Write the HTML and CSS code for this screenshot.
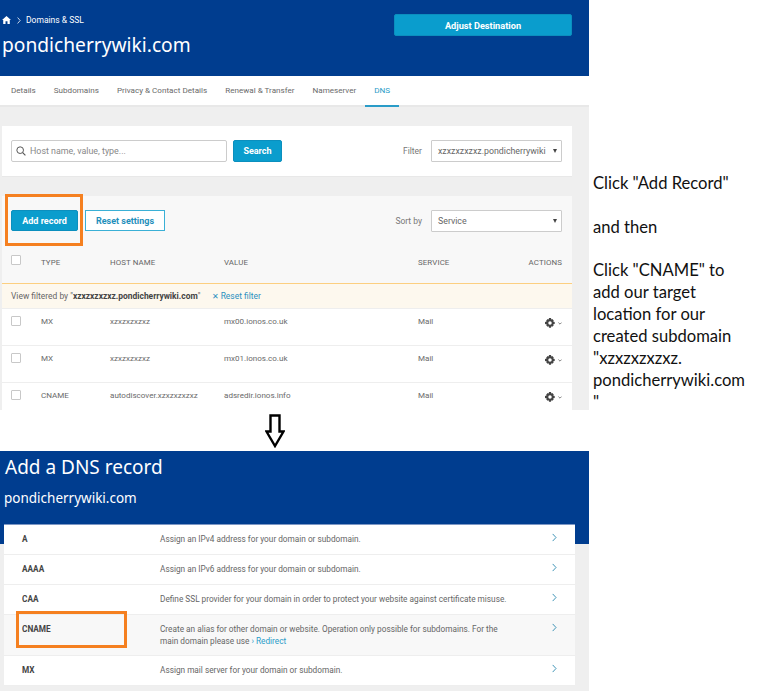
FILE: index.html
```html
<!DOCTYPE html>
<html lang="en">
<head>
<meta charset="utf-8">
<title>Add a DNS record</title>
<link rel="stylesheet" href="styles.css">
</head>
<body>
<div class="canvas">
  <main class="shots">
    <section class="shot-top">
      <header class="hero">
        <div class="hero-left">
          <div class="crumbs">
            <svg class="home" viewBox="0 0 10 9" width="9" height="8"><path d="M5 0 0 4.500h1.300V9h2.600V6h2.200v3h2.600V4.500H10z" fill="#fff"/></svg>
            <svg class="crumb-sep" viewBox="0 0 5 9" width="4" height="7"><path d="M.7.700 4 4.500.7 8.300" fill="none" stroke="#fff"/></svg>
            <span>Domains &amp; SSL</span>
          </div>
          <h1 class="domain">pondicherrywiki.com</h1>
        </div>
        <button class="btn btn-hero">Adjust Destination</button>
      </header>
      <nav class="tabs">
        <a class="tab">Details</a>
        <a class="tab">Subdomains</a>
        <a class="tab">Privacy &amp; Contact Details</a>
        <a class="tab">Renewal &amp; Transfer</a>
        <a class="tab">Nameserver</a>
        <a class="tab tab-active">DNS</a>
      </nav>
      <div class="workspace">
        <div class="search-card">
          <div class="search-box">
            <svg viewBox="0 0 12 12" width="10" height="10"><circle cx="5" cy="5" r="4" fill="none" stroke="#555" stroke-width="1.200"/><path d="m8 8 3.300 3.300" stroke="#555" stroke-width="1.300"/></svg>
            <span>Host name, value, type...</span>
          </div>
          <button class="btn btn-search">Search</button>
          <span class="field-label label-filter">Filter</span>
          <div class="select"><span>xzxzxzxzxz.pondicherrywiki</span><i class="caret"></i></div>
        </div>
        <div class="table-card">
          <div class="toolbar">
            <button class="btn btn-add">Add record</button>
            <button class="btn-outline">Reset settings</button>
            <span class="field-label label-sort">Sort by</span>
            <div class="select"><span>Service</span><i class="caret"></i></div>
          </div>
          <div class="row row-head">
            <i class="check check-head"></i><span>TYPE</span><span>HOST NAME</span><span>VALUE</span><span>SERVICE</span><span class="actions-head">ACTIONS</span>
          </div>
          <div class="filter-note">View filtered by "<b>xzxzxzxzxz.pondicherrywiki.com</b>" <span class="reset-filter">✕ Reset filter</span></div>
          <div class="row">
            <i class="check"></i><span>MX</span><span>xzxzxzxzxz</span><span>mx00.ionos.co.uk</span><span>Mail</span>
            <span class="actions"><svg class="gear" viewBox="0 0 20 20" width="10" height="10"><use href="#gear"/></svg><svg class="chev" viewBox="0 0 6 4" width="4" height="3"><path d="m.6.600 2.400 2.400L5.400.600" fill="none" stroke="#444"/></svg></span>
          </div>
          <div class="row">
            <i class="check"></i><span>MX</span><span>xzxzxzxzxz</span><span>mx01.ionos.co.uk</span><span>Mail</span>
            <span class="actions"><svg class="gear" viewBox="0 0 20 20" width="10" height="10"><use href="#gear"/></svg><svg class="chev" viewBox="0 0 6 4" width="4" height="3"><path d="m.6.600 2.400 2.400L5.400.600" fill="none" stroke="#444"/></svg></span>
          </div>
          <div class="row">
            <i class="check"></i><span>CNAME</span><span>autodiscover.xzxzxzxzxz</span><span>adsredir.ionos.info</span><span>Mail</span>
            <span class="actions"><svg class="gear" viewBox="0 0 20 20" width="10" height="10"><use href="#gear"/></svg><svg class="chev" viewBox="0 0 6 4" width="4" height="3"><path d="m.6.600 2.400 2.400L5.400.600" fill="none" stroke="#444"/></svg></span>
          </div>
        </div>
      </div>
      <div class="mark mark-add"></div>
    </section>

    <div class="arrow-gap">
      <svg viewBox="0 0 20 34" width="20" height="34"><path d="M5.500 1.500h9v16h4L10 32 1.500 17.500h4z" fill="#fff" stroke="#000" stroke-width="2.400"/></svg>
    </div>

    <section class="shot-bottom">
      <header class="dns-hero">
        <h2 class="dns-title">Add a DNS record</h2>
        <p class="dns-domain">pondicherrywiki.com</p>
      </header>
      <div class="dns-list">
        <div class="dns-row"><b>A</b><span>Assign an IPv4 address for your domain or subdomain.</span><svg class="go" viewBox="0 0 6 10" width="5" height="9"><path d="m.8.700 4 4.300-4 4.300" fill="none" stroke="#1a7fa8"/></svg></div>
        <div class="dns-row"><b>AAAA</b><span>Assign an IPv6 address for your domain or subdomain.</span><svg class="go" viewBox="0 0 6 10" width="5" height="9"><path d="m.8.700 4 4.300-4 4.300" fill="none" stroke="#1a7fa8"/></svg></div>
        <div class="dns-row"><b>CAA</b><span>Define SSL provider for your domain in order to protect your website against certificate misuse.</span><svg class="go" viewBox="0 0 6 10" width="5" height="9"><path d="m.8.700 4 4.300-4 4.300" fill="none" stroke="#1a7fa8"/></svg></div>
        <div class="dns-row dns-row-hover"><b>CNAME</b><span>Create an alias for other domain or website. Operation only possible for subdomains. For the<br>main domain please use <a class="redirect">› Redirect</a></span><svg class="go" viewBox="0 0 6 10" width="5" height="9"><path d="m.8.700 4 4.300-4 4.300" fill="none" stroke="#1a7fa8"/></svg></div>
        <div class="dns-row"><b>MX</b><span>Assign mail server for your domain or subdomain.</span><svg class="go" viewBox="0 0 6 10" width="5" height="9"><path d="m.8.700 4 4.300-4 4.300" fill="none" stroke="#1a7fa8"/></svg></div>
      </div>
      <div class="mark mark-cname"></div>
    </section>
  </main>

  <aside class="note">
    <p>Click "Add Record"</p>
    <p>and then</p>
    <p>Click "CNAME" to add our target location for our created subdomain "xzxzxzxzxz. pondicherrywiki.com "</p>
  </aside>
</div>
<svg class="sprite" width="0" height="0">
  <defs>
    <path id="gear" fill-rule="evenodd" fill="#444" d="M8 0h4l.6 3 2-.9 2.900 2.900-1.100 2 3 .9v4l-3 .6 1.100 2-2.900 2.900-2-1.100-.6 3.200H8l-.6-3.200-2 1.100L2.500 15l1.100-2-3.600-.9V8l3-.9L2.500 5l2.900-2.900 2 .9zM10 6.500a3.500 3.500 0 1 0 0 7 3.500 3.500 0 0 0 0-7z"/>
  </defs>
</svg>
</body>
</html>
```
FILE: styles.css
```css
* { box-sizing: border-box; }
html, body { margin: 0; padding: 0; background: #fff; }
body { font-family: Roboto, sans-serif; color: #555; overflow: hidden; }
.sprite { position: absolute; }
.canvas { display: flex; width: 757px; height: 691px; overflow: hidden; }
.shots { width: 589px; flex: none; }

.shot-top { position: relative; height: 410px; overflow: hidden; background: #efefef; }
.hero { height: 76px; background: #003d8f; display: flex; justify-content: space-between; align-items: flex-start; padding: 14px 17px 0 2px; color: #fff; }
.crumbs { display: flex; align-items: center; gap: 6px; font-size: 8.500px; height: 12px; }
.crumb-sep { margin-right: -1px; }
.domain { margin: 6px 0 0; font-family: "Noto Sans", sans-serif; font-weight: 400; font-size: 19.200px; line-height: 26px; }
.btn { border: 1px solid #0b8fbe; background: #0a9dcd; color: #fff; font-family: inherit; font-weight: 700; border-radius: 2px; padding: 0; }
.btn-hero { width: 178px; height: 22px; font-size: 9.200px; }
.tabs { height: 31px; background: #fff; border-bottom: 2px solid #e8e8e8; display: flex; gap: 18px; padding-left: 11px; }
.tab { height: 31px; font-size: 8.100px; line-height: 29px; color: #6a6a6a; white-space: nowrap; }
.tab-active { color: #2a9cc8; width: 34px; margin: 0 -9px; text-align: center; border-bottom: 2px solid #2a9cc8; }
.workspace { padding: 19px 17px 0 2px; }
.search-card { height: 51px; background: #fff; border-bottom: 1px solid #e8e8e8; display: flex; align-items: center; padding: 0 10px 0 9px; }
.search-box { width: 216px; height: 22px; border: 1px solid #ccc; border-radius: 2px; display: flex; align-items: center; gap: 4px; padding-left: 4px; font-size: 8.900px; color: #888; }
.btn-search { width: 49px; height: 22px; margin-left: 6px; font-size: 9px; }
.field-label { font-size: 8.500px; color: #777; }
.label-filter { margin-left: auto; margin-right: 9px; }
.label-sort { margin-left: auto; margin-right: 9px; }
.select { width: 131px; height: 22px; border: 1px solid #ccc; border-radius: 1px; background: #fff; display: flex; align-items: center; padding-left: 6px; font-size: 8.800px; color: #666; position: relative; white-space: nowrap; overflow: hidden; }
.caret { position: absolute; right: 4px; top: 8px; border: 2.500px solid transparent; border-top: 4px solid #444; border-bottom: 0; }
.table-card { margin-top: 19px; background: #f8f8f8; }
.toolbar { height: 52px; display: flex; align-items: center; padding: 0 10px 3px 9px; }
.btn-add { width: 67px; height: 21px; font-size: 9px; }
.btn-outline { width: 80px; height: 21px; margin-left: 7px; border: 1px solid #3ab0d6; background: #fff; color: #1f8fbb; font-family: inherit; font-weight: 700; font-size: 9px; padding: 0; }
.row { display: grid; grid-template-columns: 30px 69px 114px 194px 1fr 60px; align-items: start; padding: 7px 10px 0 9px; height: 37px; background: #fff; border-bottom: 1px solid #eee; font-size: 8.050px; line-height: 12px; color: #6a6a6a; }
.row-head { height: 35px; padding-top: 9px; background: #f8f8f8; border-bottom: 0; font-size: 7.900px; letter-spacing: .1px; color: #666; }
.check { width: 10px; height: 10px; border: 1px solid #c8c8c8; border-radius: 1px; background: #fff; display: block; }
.check-head { margin-top: -2px; }
.actions-head { text-align: right; }
.actions { display: flex; justify-content: flex-end; align-items: center; gap: 3px; height: 12px; padding-top: 2px; }
.filter-note { height: 26px; background: #fdf8ee; border-top: 1px solid #fccf80; border-bottom: 1px solid #eee; padding-left: 9px; font-size: 8.450px; line-height: 24px; color: #666; }
.filter-note b { color: #444; }
.reset-filter { margin-left: 9px; color: #2a8fc0; }
.mark { position: absolute; border: 3px solid #f58020; }
.mark-add { left: 5px; top: 194px; width: 78px; height: 52px; }

.arrow-gap { height: 41px; display: flex; padding: 4px 0 0 265px; }

.shot-bottom { position: relative; height: 240px; overflow: hidden; background: #efefef; }
.dns-hero { height: 93px; background: #003d8f; color: #fff; padding: 4px 0 0 5px; }
.dns-title { margin: 0; font-family: "Noto Sans", sans-serif; font-weight: 400; font-size: 19px; line-height: 24px; }
.dns-domain { margin: 9px 0 0 -1px; font-family: "Noto Sans", sans-serif; font-size: 13.500px; line-height: 20px; }
.dns-list { margin: -20px 14px 0 4px; background: #fff; border-top: 1px solid #7d97c4; }
.dns-row { position: relative; display: grid; grid-template-columns: 138px 1fr 23px; padding: 8px 0 0 18px; height: 30px; border-bottom: 1px solid #eee; font-size: 8.250px; line-height: 12px; color: #666; }
.dns-row b { color: #444; }
.dns-row-hover { height: 41px; background: #f8f8f8; }
.go { margin-top: 0; }
.redirect { color: #2a9cc8; }
.mark-cname { left: 16px; top: 160px; width: 111px; height: 37px; }

.note { padding: 172px 0 0 4px; width: 160px; font-family: Lato, sans-serif; font-size: 16.600px; line-height: 22px; color: #111; }
.note p { margin: 0 0 21.500px; }
```
